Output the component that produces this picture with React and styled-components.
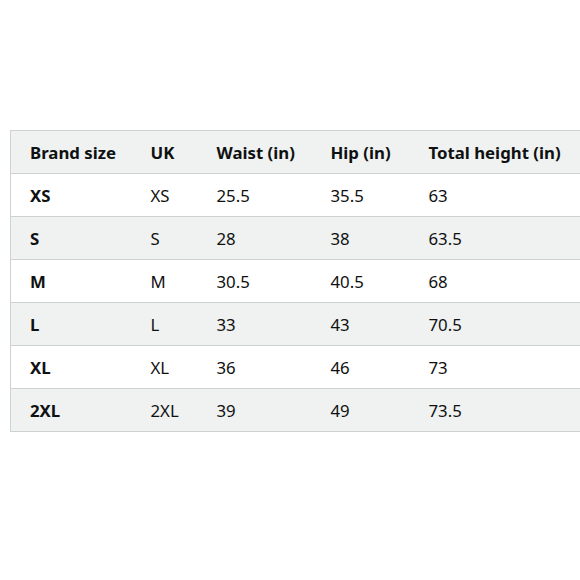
import React from "react";
import styled, { createGlobalStyle } from "styled-components";

const Global = createGlobalStyle`
  html, body { margin: 0; padding: 0; background: #fff; }
  body { font-family: "Noto Sans", "Open Sans", sans-serif; color: #0f1111; overflow: hidden; }
`;

const Page = styled.div`
  width: 580px;
  height: 580px;
  padding-top: 130px;
  padding-left: 10px;
  box-sizing: border-box;
  overflow: hidden;
`;

const Table = styled.table`
  border-collapse: collapse;
  width: 600px;
  table-layout: fixed;
  border: 1px solid #cfd2d2;
  font-size: 16.8px;
`;

const Col = styled.col`
  width: ${(p) => p.$w}px;
`;

const Row = styled.tr`
  height: 43px;
  background: ${(p) => (p.$shade ? "#f0f2f2" : "#ffffff")};
  border-bottom: 1px solid #cfd2d2;
`;

const Head = styled.th`
  text-align: left;
  font-weight: 700;
  padding: 1px 0 0 19px;
  white-space: nowrap;
`;

const Cell = styled.td`
  text-align: left;
  font-weight: ${(p) => (p.$bold ? 700 : 400)};
  padding: 1px 0 0 19px;
  white-space: nowrap;
`;

const headers = ["Brand size", "UK", "Waist (in)", "Hip (in)", "Total height (in)"];
const rows = [
  ["XS", "XS", "25.5", "35.5", "63"],
  ["S", "S", "28", "38", "63.5"],
  ["M", "M", "30.5", "40.5", "68"],
  ["L", "L", "33", "43", "70.5"],
  ["XL", "XL", "36", "46", "73"],
  ["2XL", "2XL", "39", "49", "73.5"],
];

export default function App() {
  return (
    <>
      <Global />
      <Page>
        <Table>
          <colgroup>
            <Col $w={121} />
            <Col $w={66} />
            <Col $w={114} />
            <Col $w={98} />
            <Col $w={201} />
          </colgroup>
          <thead>
            <Row $shade>
              {headers.map((h) => (
                <Head key={h}>{h}</Head>
              ))}
            </Row>
          </thead>
          <tbody>
            {rows.map((r, i) => (
              <Row key={r[0]} $shade={i % 2 === 1}>
                {r.map((c, j) => (
                  <Cell key={j} $bold={j === 0}>
                    {c}
                  </Cell>
                ))}
              </Row>
            ))}
          </tbody>
        </Table>
      </Page>
    </>
  );
}
